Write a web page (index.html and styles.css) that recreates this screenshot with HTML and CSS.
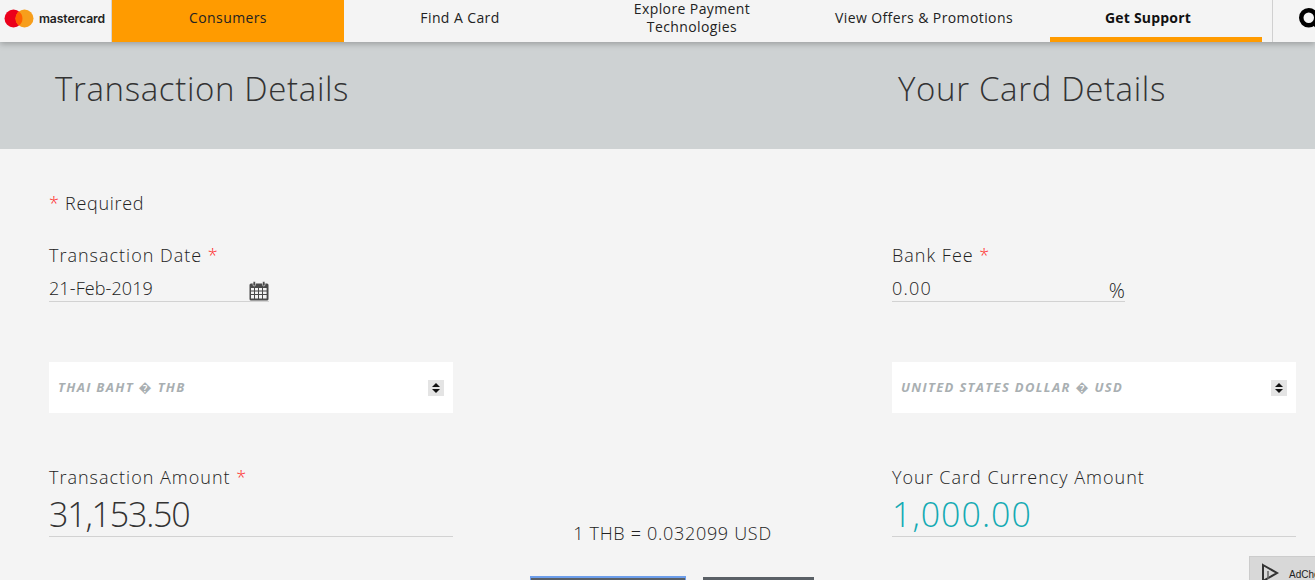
FILE: index.html
```html
<!DOCTYPE html>
<html lang="en">
<head>
<meta charset="utf-8">
<title>Transaction Details</title>
<link rel="stylesheet" href="styles.css">
</head>
<body>
<header class="topbar">
  <div class="logo">
    <svg class="logo-mark" width="30" height="19" viewBox="0 0 30 19"><circle cx="9.5" cy="9.5" r="9" fill="#eb001b"/><circle cx="20.5" cy="9.5" r="9" fill="#f79e1b"/><path d="M15 2.4a9 9 0 0 1 0 14.2a9 9 0 0 1 0-14.2z" fill="#ff5f00"/></svg>
    <span class="logo-text">mastercard</span>
  </div>
  <nav class="nav">
    <a class="nav-item nav-active">Consumers</a>
    <a class="nav-item">Find A Card</a>
    <a class="nav-item">Explore Payment<br>Technologies</a>
    <a class="nav-item">View Offers &amp; Promotions</a>
    <a class="nav-item nav-current">Get Support</a>
  </nav>
  <div class="search">
    <svg width="26" height="26" viewBox="0 0 26 26"><circle cx="9.75" cy="9.75" r="7.5" fill="none" stroke="#000" stroke-width="4.5"/><path d="M15 15l6 6" stroke="#000" stroke-width="4.5"/></svg>
  </div>
</header>
<section class="band">
  <h1 class="band-title band-left">Transaction Details</h1>
  <h1 class="band-title band-right">Your Card Details</h1>
</section>
<main class="form">
  <p class="required"><span class="star">*</span> Required</p>
  <div class="grid">
    <div class="col">
      <label class="label">Transaction Date <span class="star">*</span></label>
      <div class="input input-date"><span class="input-value">21-Feb-2019</span>
        <svg class="cal" width="20" height="20" viewBox="0 0 20 20"><rect x="0.5" y="2.5" width="19" height="17" rx="1.5" fill="#4a4a4a"/><g fill="#f4f4f4"><rect x="2" y="7" width="3" height="2.5"/><rect x="6" y="7" width="3" height="2.5"/><rect x="10" y="7" width="3" height="2.5"/><rect x="14" y="7" width="3.6" height="2.5"/><rect x="2" y="10.5" width="3" height="2.5"/><rect x="6" y="10.5" width="3" height="2.5"/><rect x="10" y="10.5" width="3" height="2.5"/><rect x="14" y="10.5" width="3.6" height="2.5"/><rect x="2" y="14" width="3" height="3.5"/><rect x="6" y="14" width="3" height="3.5"/><rect x="10" y="14" width="3" height="3.5"/><rect x="14" y="14" width="3.6" height="3.5"/></g><rect x="4" y="0.5" width="2.5" height="4.5" rx="1.2" fill="#4a4a4a" stroke="#f4f4f4" stroke-width="0.6"/><rect x="13.5" y="0.5" width="2.5" height="4.5" rx="1.2" fill="#4a4a4a" stroke="#f4f4f4" stroke-width="0.6"/></svg>
      </div>
      <div class="select"><span class="select-text">THAI BAHT � THB</span><span class="spin"><i class="up"></i><i class="down"></i></span></div>
      <label class="label label-amount">Transaction Amount <span class="star">*</span></label>
      <div class="amount">31,153.50</div>
    </div>
    <div class="middle">
      <p class="rate">1 THB = 0.032099 USD</p>
      <div class="buttons"><button class="btn btn-primary">&nbsp;</button><button class="btn btn-second">&nbsp;</button></div>
    </div>
    <div class="col">
      <label class="label">Bank Fee <span class="star">*</span></label>
      <div class="input input-fee"><span class="input-value">0.00</span><span class="percent">%</span></div>
      <div class="select"><span class="select-text">UNITED STATES DOLLAR � USD</span><span class="spin"><i class="up"></i><i class="down"></i></span></div>
      <label class="label label-amount">Your Card Currency Amount</label>
      <div class="amount amount-teal">1,000.00</div>
    </div>
  </div>
</main>
<aside class="adchoices">
  <svg width="20" height="20" viewBox="0 0 20 20"><path d="M2 2l14 8-14 8z" fill="none" stroke="#333" stroke-width="2"/><path d="M7 8v8" stroke="#666" stroke-width="1.5"/></svg>
  <span>AdChoices</span>
</aside>
</body>
</html>
```
FILE: styles.css
```css
* { box-sizing: border-box; }
html, body { margin: 0; padding: 0; height: 580px; overflow: hidden; }
body { background: #f4f4f4; font-family: "Open Sans", "Noto Sans", sans-serif; font-weight: 300; color: #222; position: relative; }

.topbar { display: flex; height: 42px; background: #f4f4f4; position: relative; z-index: 2; box-shadow: 0 2px 6px rgba(0,0,0,.25); }
.logo { width: 112px; flex: none; display: flex; align-items: center; padding: 0 0 5px 4px; gap: 5px; border-right: 1px solid #d5d5d5; }
.logo-text { font-family: "Inter", sans-serif; font-size: 12.2px; font-weight: 600; color: #222; letter-spacing: -.1px; }
.nav { display: flex; flex: none; }
.nav-item { width: 232px; height: 42px; display: flex; align-items: center; justify-content: center; text-align: center; font-size: 14px; line-height: 18px; letter-spacing: .4px; font-weight: 400; color: #222; padding-bottom: 6px; }
.nav-active { background: #ff9b00; }
.nav-current { width: 212px; margin: 0 10px; font-weight: 700; color: #111; border-bottom: 5px solid #ff9b00; padding: 0 16px 1px 0; letter-spacing: .2px; }
.search { flex: none; width: 43px; border-left: 1px solid #d0d0d0; padding: 8px 0 0 26px; overflow: hidden; }
.search svg { display: block; }

.band { height: 107px; background: #ced2d3; display: flex; padding-left: 55px; padding-top: 27px; }
.band-title { margin: 0; font-size: 33px; line-height: 40px; font-weight: 300; letter-spacing: .65px; color: #333; }
.band-left { width: 843px; }

.form { height: 431px; overflow: hidden; padding: 43px 0 0 49px; }
.required { margin: 0; font-size: 18px; line-height: 22px; letter-spacing: .7px; }
.star { color: #ff2a2a; font-weight: 300; }
.grid { display: grid; grid-template-columns: 404px 439px 404px; margin-top: 30px; }
.col { display: flex; flex-direction: column; }
.label { font-size: 18px; line-height: 22px; letter-spacing: 1px; display: block; }
.input { display: flex; align-items: center; justify-content: space-between; height: 26px; margin-top: 10px; font-size: 18px; border-bottom: 1px solid #d2d2d2; }
.input-date { width: 220px; }
.input-fee { width: 233px; }
.input-value { flex: 1; line-height: 24px; letter-spacing: .1px; margin-top: -1px; }
.input-fee .input-value { letter-spacing: 1.2px; }
.cal { margin-top: 4px; flex: none; }
.percent { font-size: 20px; margin-top: 4px; }
.select { height: 51px; margin-top: 60px; background: #fff; display: flex; align-items: center; justify-content: space-between; padding: 0 9px; font-size: 13px; font-style: italic; font-weight: 700; letter-spacing: 1.33px; color: #a9afb2; }
.select-text { margin-top: -2px; }
.spin { width: 16px; height: 16px; background: #e4e4e4; display: flex; flex-direction: column; align-items: center; justify-content: center; gap: 2px; }
.up, .down { display: block; width: 0; height: 0; border-left: 4px solid transparent; border-right: 4px solid transparent; }
.up { border-bottom: 4px solid #111; }
.down { border-top: 4px solid #111; }
.label-amount { margin-top: 53px; }
.amount { height: 49px; border-bottom: 1px solid #d2d2d2; font-size: 34px; line-height: 46px; padding-top: 3px; color: #333; font-weight: 300; letter-spacing: -1.2px; }
.amount-teal { color: #14aab3; letter-spacing: 1px; }

.middle { display: flex; flex-direction: column; align-items: center; padding-top: 278px; }
.rate { margin: 0; font-size: 18px; line-height: 22px; letter-spacing: .7px; width: 100%; text-align: center; }
.buttons { display: flex; gap: 18px; margin-top: 33px; }
.btn { height: 40px; border: 0; padding: 0; font-family: inherit; background: #5a6066; }
.btn-primary { width: 154px; border-top: 1px solid #6d9eeb; box-shadow: 0 0 0 1px #6d9eeb; }
.btn-second { width: 111px; }

.adchoices { position: absolute; left: 1249px; top: 556px; width: 66px; height: 24px; background: #d8d8d8; border-top: 1px solid #ccc; border-left: 1px solid #ccc; display: flex; gap: 8px; padding: 6px 0 0 11px; overflow: hidden; font-family: "Liberation Sans", sans-serif; font-weight: 400; font-size: 10px; line-height: 24px; color: #222; white-space: nowrap; }
.adchoices svg { flex: none; }
```
